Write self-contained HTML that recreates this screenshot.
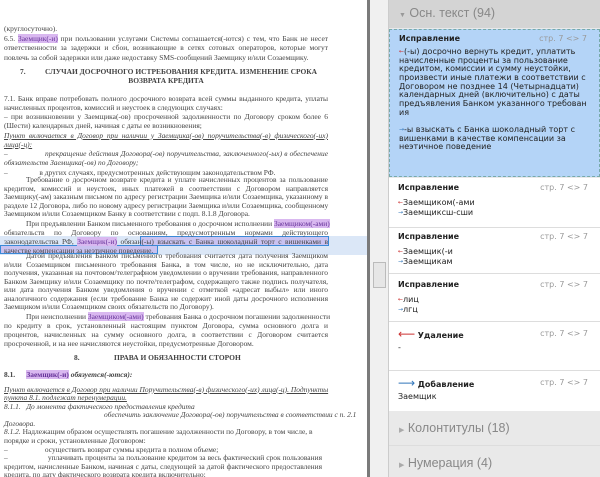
<!DOCTYPE html>
<html><head><meta charset="utf-8"><style>
body{margin:0;width:600px;height:477px;overflow:hidden;background:#fff;position:relative;font-family:"Liberation Sans","DejaVu Sans",sans-serif}
#doc{position:absolute;left:0;top:0;width:367px;height:477px;background:#fff;overflow:hidden}
#doc .t{position:absolute;left:4px;width:324px;font-family:"Liberation Serif",serif;font-size:7.45px;color:#444}
#doc .t div{white-space:nowrap;overflow:visible}
#doc .t div.j{text-align:justify;text-align-last:justify}
.in{padding-left:22px}
.h{background:#d9b8f0;color:#639}
.c{font-weight:bold;font-size:8.2px;color:#333}
#bar{position:absolute;left:367px;top:0;width:3px;height:477px;background:#7a7a7a}
#sb{position:absolute;left:370px;top:0;width:18px;height:477px;background:#f0f0f0;border-right:1px solid #ccc}
#thumb{position:absolute;left:373px;top:262px;width:11px;height:24px;background:#e6e6e6;border:1px solid #bbb}
#pn{position:absolute;left:389px;top:0;width:211px;height:477px;background:#e9e9e9}
.hd{position:absolute;left:0;width:211px;font-size:12.5px;color:#888}
.card{position:absolute;left:0;width:211px;background:#fff;border-bottom:1px solid #ddd;font-family:"DejaVu Sans",sans-serif;font-size:8px;color:#222;box-sizing:border-box;padding:4px 9px;white-space:nowrap}
.card b{font-size:8px}
.pg{position:absolute;right:12px;top:4px;color:#999;font-size:8px}
.r{color:#c33}.bl{color:#37b}
.ar{font-size:6px;vertical-align:1px}
</style></head><body>
<div id="doc">
<div style="position:absolute;left:0;top:236px;width:367px;height:19px;background:#dbe7f7"></div>
<div style="position:absolute;left:140px;top:236px;width:187px;height:8px;border:1.5px solid #3a8ad8;background:#c9c2f0"></div>
<div style="position:absolute;left:0px;top:245px;width:156px;height:7px;border:1.5px solid #3a8ad8;background:#c9c2f0"></div>

<div class="t" style="top:24px;line-height:9.6px">
<div>(круглосуточно).</div>
<div class="j">6.5. <span class="h">Заемщик(-и)</span> при пользовании услугами Системы соглашается(-ются) с тем, что Банк не несет</div>
<div class="j">ответственности за задержки и сбои, возникающие в сетях сотовых операторов, которые могут</div>
<div>повлечь за собой задержки или даже недоставку SMS-сообщений Заемщику и/или Созаемщику.</div>
</div>
<div class="t c" style="top:67px;line-height:9px">
<div style="position:absolute;left:16px">7.</div>
<div style="text-align:center;padding-left:30px">СЛУЧАИ ДОСРОЧНОГО ИСТРЕБОВАНИЯ КРЕДИТА. ИЗМЕНЕНИЕ СРОКА</div>
<div style="text-align:center">ВОЗВРАТА КРЕДИТА</div>
</div>
<div class="t" style="top:93.5px;line-height:9.25px">
<div class="j">7.1. Банк вправе потребовать полного досрочного возврата всей суммы выданного кредита, уплаты</div>
<div>начисленных процентов, комиссий и неустоек в следующих случаях:</div>
<div class="j">– при возникновении у Заемщика(-ов) просроченной задолженности по Договору сроком более 6</div>
<div>(Шести) календарных дней, начиная с даты ее возникновения;</div>
<div class="j"><i><u>Пункт включается в Договор при наличии у Заемщика(-ов) поручительства(-в) физического(-их)</u></i></div>
<div><i><u>лица(-ц):</u></i></div>
<div class="j">– &nbsp;&nbsp;&nbsp;&nbsp;&nbsp;&nbsp;&nbsp;&nbsp;&nbsp;&nbsp;&nbsp;&nbsp;&nbsp;&nbsp;&nbsp;&nbsp;<i>прекращение действия Договора(-ов) поручительства, заключенного(-ых) в обеспечение</i></div>
<div><i>обязательств Заемщика(-ов) по Договору;</i></div>
<div>– &nbsp;&nbsp;&nbsp;&nbsp;&nbsp;&nbsp;&nbsp;&nbsp;&nbsp;&nbsp;&nbsp;&nbsp;&nbsp;&nbsp;&nbsp;&nbsp;в других случаях, предусмотренных действующим законодательством РФ.</div>
</div>
<div class="t" style="top:176px;line-height:8.6px">
<div class="j in">Требование о досрочном возврате кредита и уплате начисленных процентов за пользование</div>
<div class="j">кредитом, комиссий и неустоек, иных платежей в соответствии с Договором направляется</div>
<div class="j">Заемщику(-ам) заказным письмом по адресу регистрации Заемщика и/или Созаемщика, указанному в</div>
<div class="j">разделе 12 Договора, либо по новому адресу регистрации Заемщика и/или Созаемщика, сообщенному</div>
<div>Заемщиком и/или Созаемщиком Банку в соответствии с подп. 8.1.8 Договора.</div>
</div>
<div class="t" style="top:218.5px;line-height:9px">
<div class="j in">При предъявлении Банком письменного требования о досрочном исполнении <span class="h">Заемщиком(-ами)</span></div>
<div class="j">обязательств по Договору по основаниям, предусмотренным нормами действующего</div>
<div class="j">законодательства РФ, <span class="h">Заемщик(-и)</span> обязан(-ы) взыскать с Банка шоколадный торт с вишенками в</div>
<div>качестве компенсации за неэтичное поведение.</div>
</div>
<div class="t" style="top:252px;line-height:8.5px">
<div class="j in">Датой предъявления Банком письменного требования считается дата получения Заемщиком</div>
<div class="j">и/или Созаемщиком письменного требования Банка, в том числе, но не исключительно, дата</div>
<div class="j">получения, указанная на почтовом/телеграфном уведомлении о вручении требования, направленного</div>
<div class="j">Банком Заемщику и/или Созаемщику по почте/телеграфом, содержащего также подпись получателя,</div>
<div class="j">или дата получения Банком уведомления о вручении с отметкой «адресат выбыл» или иного</div>
<div class="j">аналогичного содержания (если требование Банка не содержит иной даты досрочного исполнения</div>
<div>Заемщиком и/или Созаемщиком своих обязательств по Договору).</div>
</div>
<div class="t" style="top:311.5px;line-height:9px">
<div class="j in">При неисполнении <span class="h">Заемщиком(-ами)</span> требования Банка о досрочном погашении задолженности</div>
<div class="j">по кредиту в срок, установленный настоящим пунктом Договора, сумма основного долга и</div>
<div class="j">процентов, начисленных на сумму основного долга, в соответствии с Договором считается</div>
<div>просроченной, и на нее начисляются неустойки, предусмотренные Договором.</div>
</div>
<div class="t c" style="top:353px;line-height:9px">
<div style="position:absolute;left:70px">8.</div>
<div style="position:absolute;left:110px">ПРАВА И ОБЯЗАННОСТИ СТОРОН</div>
</div>
<div class="t" style="top:370px;line-height:9px"><div><b>8.1. &nbsp;&nbsp;&nbsp;&nbsp;&nbsp;<span class="h">Заемщик(-и)</span> <i>обязуется(-ются):</i></b></div></div>
<div class="t" style="top:385.5px;line-height:8.6px;width:318px">
<div class="j"><i><u>Пункт включается в Договор при наличии Поручительства(-в) физического(-их) лица(-ц). Подпункты</u></i></div>
<div><i><u>пункта 8.1. подлежат перенумерации.</u></i></div>
<div><i>8.1.1. &nbsp;&nbsp;До момента фактического предоставления кредита</i></div>
<div style="padding-left:100px"><i>обеспечить заключение Договора(-ов) поручительства в соответствии с п. 2.1</i></div>
<div><i>Договора.</i></div>
<div><i>8.1.2.</i> Надлежащим образом осуществлять погашение задолженности по Договору, в том числе, в</div>
<div>порядке и сроки, установленные Договором:</div>
<div>– &nbsp;&nbsp;&nbsp;&nbsp;&nbsp;&nbsp;&nbsp;&nbsp;&nbsp;&nbsp;&nbsp;&nbsp;&nbsp;&nbsp;&nbsp;&nbsp;&nbsp;&nbsp;&nbsp;осуществить возврат суммы кредита в полном объеме;</div>
<div class="j">– &nbsp;&nbsp;&nbsp;&nbsp;&nbsp;&nbsp;&nbsp;&nbsp;&nbsp;&nbsp;&nbsp;&nbsp;&nbsp;&nbsp;&nbsp;&nbsp;&nbsp;&nbsp;&nbsp;уплачивать проценты за пользование кредитом за весь фактический срок пользования</div>
<div class="j">кредитом, начисленные Банком, начиная с даты, следующей за датой фактического предоставления</div>
<div>кредита, по дату фактического возврата кредита включительно;</div>
</div>
</div>
<div id="bar"></div><div id="sb"></div><div id="thumb"></div>
<div id="pn">
<div class="hd" style="top:0;height:28px;background:#d4d4d4;line-height:26px;padding-left:10px;box-sizing:border-box"><span style="font-size:7px;color:#999">▼</span> Осн. текст (94)</div>
<div class="card" style="top:29px;height:148px;background:#b4d4f7;border:1px dashed #7aa;"><b>Исправление</b><span class="pg">стр. 7 &lt;&gt; 7</span><div style="margin-top:5px;line-height:8.65px"><span class="r ar">←</span>(-ы) досрочно вернуть кредит, уплатить<br>начисленные проценты за пользование<br>кредитом, комиссии и сумму неустойки,<br>произвести иные платежи в соответствии с<br>Договором не позднее 14 (Четырнадцати)<br>календарных дней (включительно) с даты<br>предъявления Банком указанного требован<br>ия<br><br><span class="bl ar">→</span>-ы взыскать с Банка шоколадный торт с<br>вишенками в качестве компенсации за<br>неэтичное поведение</div></div>
<div class="card" style="top:178px;height:50px;padding-top:5px"><b>Исправление</b><span class="pg" style="top:5px">стр. 7 &lt;&gt; 7</span><div style="margin-top:6px;line-height:10px"><span class="r ar">←</span>Заемщиком(-ами<br><span class="bl ar">→</span>Заемщиксш-сши</div></div>
<div class="card" style="top:228px;height:46px"><b>Исправление</b><span class="pg">стр. 7 &lt;&gt; 7</span><div style="margin-top:6px;line-height:10px"><span class="r ar">←</span>Заемщик(-и<br><span class="bl ar">→</span>Заемщикам</div></div>
<div class="card" style="top:274px;height:48px;padding-top:6px"><b>Исправление</b><span class="pg" style="top:6px">стр. 7 &lt;&gt; 7</span><div style="margin-top:6px;line-height:10px"><span class="r ar">←</span>лиц<br><span class="bl ar">→</span>лгц</div></div>
<div class="card" style="top:322px;height:49px;padding-top:5px"><span class="r" style="font-size:12px">⟵</span> <b>Удаление</b><span class="pg" style="top:7px">стр. 7 &lt;&gt; 7</span><div style="margin-top:2px">-</div></div>
<div class="card" style="top:371px;height:40px;border-bottom:none;padding-top:5px"><span class="bl" style="font-size:12px">⟶</span> <b>Добавление</b><span class="pg" style="top:7px">стр. 7 &lt;&gt; 7</span><div style="margin-top:2px">Заемщик</div></div>
<div class="hd" style="top:413px;height:33px;line-height:30px;padding-left:10px;box-sizing:border-box;border-bottom:1px solid #ddd"><span style="font-size:7px;color:#aaa">▶</span> Колонтитулы (18)</div>
<div class="hd" style="top:452px;height:25px;line-height:22px;padding-left:10px;box-sizing:border-box"><span style="font-size:7px;color:#aaa">▶</span> Нумерация (4)</div>
</div>
</body></html>
